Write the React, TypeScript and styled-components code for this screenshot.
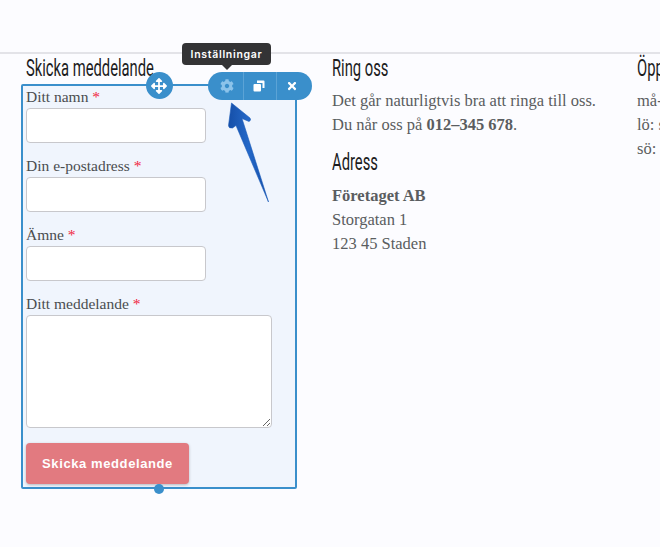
import React from 'react';
import styled, {createGlobalStyle} from 'styled-components';
import {FaArrowsAlt, FaCog, FaTimes} from 'react-icons/fa';

const GlobalStyle = createGlobalStyle`
  html, body {
    margin: 0;
    padding: 0;
    background: #FCFCFF;
  }
`;

const Page = styled.div`
  width: 660px;
  height: 547px;
  overflow: hidden;
  font-family: "Liberation Serif", serif;
  font-size: 16.5px;
  line-height: 24px;
  color: #5A5D60;
`;

const TopBar = styled.div`
  height: 52px;
  border-bottom: 2px solid #E3E3E8;
`;

const Columns = styled.div`
  display: flex;
  width: 800px;
`;

const Column = styled.div<{$width: number}>`
  flex: none;
  width: ${p => p.$width}px;
  box-sizing: border-box;
`;

const FormColumn = styled(Column)`
  padding-left: 26px;
`;

const Heading = styled.h3<{$top?: number; $bottom?: number}>`
  margin: ${p => p.$top ?? 0}px 0 ${p => p.$bottom ?? 0}px;
  font-family: "Roboto", sans-serif;
  font-weight: 400;
  font-size: 24px;
  line-height: 28px;
  color: #1C1C1E;
  white-space: nowrap;
  transform: scaleX(0.615);
  transform-origin: left center;
`;

const Paragraph = styled.p<{$top: number}>`
  margin: ${p => p.$top}px 0 0;
  white-space: nowrap;
`;

const FormBox = styled.div`
  position: relative;
  width: 276px;
  height: 405px;
  margin: 0 0 0 -5px;
  padding: 0 3px;
  box-sizing: border-box;
  border: 2px solid #3A8FCB;
  border-radius: 2px;
  background: #F0F5FD;
`;

const Field = styled.div`
  display: flex;
  flex-direction: column;
  align-items: flex-start;
  margin-bottom: 12px;
`;

const Label = styled.label`
  height: 22px;
  line-height: 22px;
  font-size: 15.5px;
  color: #4A4D50;
`;

const Required = styled.span`
  color: #F0233C;
`;

const TextInput = styled.input`
  width: 180px;
  height: 35px;
  box-sizing: border-box;
  border: 1px solid #C8C8CC;
  border-radius: 4px;
  background: #FFFFFF;
`;

const MessageInput = styled.textarea`
  display: block;
  width: 246px;
  height: 113px;
  box-sizing: border-box;
  border: 1px solid #C8C8CC;
  border-radius: 4px;
  background: #FFFFFF;
`;

const SubmitButton = styled.button`
  display: block;
  width: 163px;
  height: 41px;
  margin-top: 15px;
  padding: 0;
  border: none;
  border-radius: 4px;
  background: #E27A80;
  box-shadow: 0 1px 3px rgba(0, 0, 0, 0.25);
  color: #FFFFFF;
  font-family: "Liberation Sans", sans-serif;
  font-weight: 700;
  font-size: 13px;
  letter-spacing: 0.6px;
`;

const MoveHandle = styled.div`
  position: absolute;
  left: 123px;
  top: -14px;
  width: 27px;
  height: 27px;
  padding-right: 1px;
  box-sizing: border-box;
  display: flex;
  align-items: center;
  justify-content: center;
  border-radius: 50%;
  background: #3A8FCB;
  color: #FFFFFF;
  font-size: 16px;
`;

const Toolbar = styled.div`
  position: absolute;
  left: 185px;
  top: -14px;
  display: flex;
  height: 28px;
  border-radius: 14px;
  background: #3A8FCB;
  color: #FFFFFF;
`;

const ToolButton = styled.div<{$width: number; $active?: boolean; $inset?: string}>`
  width: ${p => p.$width}px;
  padding: ${p => p.$inset ?? '0'};
  box-sizing: border-box;
  display: flex;
  align-items: center;
  justify-content: center;
  font-size: ${p => (p.$active ? 14 : 12)}px;
  color: ${p => (p.$active ? '#8CC3EA' : '#FFFFFF')};
  & + & {
    border-left: 1px solid #5BA3D6;
  }
`;

const Tooltip = styled.div`
  position: absolute;
  left: 159px;
  top: -43px;
  width: 89px;
  height: 22px;
  border-radius: 4px;
  background: #333335;
  color: #FFFFFF;
  font-family: "Inter", "Liberation Sans", sans-serif;
  font-weight: 600;
  font-size: 10.5px;
  line-height: 23px;
  letter-spacing: 0.7px;
  text-align: center;
  &::after {
    content: "";
    position: absolute;
    left: 40px;
    top: 22px;
    border: 5px solid transparent;
    border-top-color: #333335;
    border-bottom-width: 0;
  }
`;

const Arrow = styled.svg`
  position: absolute;
  left: 203px;
  top: 14px;
`;

const ResizeDot = styled.div`
  position: absolute;
  left: 131px;
  bottom: -7px;
  width: 10px;
  height: 10px;
  border-radius: 50%;
  background: #3A8FCB;
`;

const CloneIcon = () => (
    <svg width="12" height="12" viewBox="0 0 12 12">
        <path d="M4 0.5h6.5a1 1 0 0 1 1 1V8h-2V3H4z" fill="currentColor"/>
        <rect x="0.5" y="4" width="7.5" height="7.5" rx="1" fill="currentColor"/>
    </svg>
);

const fields = ['Ditt namn', 'Din e-postadress', 'Ämne'];

const App: React.FC = () => {
    return (
        <Page>
            <GlobalStyle/>
            <TopBar/>
            <Columns>
                <FormColumn $width={332}>
                    <Heading $bottom={2}>Skicka meddelande</Heading>
                    <FormBox>
                        {fields.map(field => (
                            <Field key={field}>
                                <Label>{field} <Required>*</Required></Label>
                                <TextInput/>
                            </Field>
                        ))}
                        <Field>
                            <Label>Ditt meddelande <Required>*</Required></Label>
                            <MessageInput/>
                        </Field>
                        <SubmitButton>Skicka meddelande</SubmitButton>
                        <MoveHandle><FaArrowsAlt/></MoveHandle>
                        <Tooltip>Inställningar</Tooltip>
                        <Toolbar>
                            <ToolButton $width={35} $active $inset="0 0 0 2px"><FaCog/></ToolButton>
                            <ToolButton $width={33} $inset="0 2px 0 0"><CloneIcon/></ToolButton>
                            <ToolButton $width={36} $inset="0 5px 0 0"><FaTimes/></ToolButton>
                        </Toolbar>
                        <Arrow width="46" height="104" viewBox="226 100 46 104">
                            <defs>
                                <linearGradient id="arrowFill" x1="0" y1="0" x2="1" y2="0">
                                    <stop offset="0" stopColor="#164FA8"/>
                                    <stop offset="0.5" stopColor="#2468C8"/>
                                    <stop offset="1" stopColor="#144CA6"/>
                                </linearGradient>
                            </defs>
                            <path
                                d="M231.5 103 L250 118 Q251.5 120.5 249 121.5 L242 118.5 L268.5 202 L236 125.5 L232.5 128 Q228.5 128.5 228.5 125.5 Z"
                                fill="url(#arrowFill)"
                                stroke="#1A5AB8"
                                strokeWidth="0.6"
                                strokeLinejoin="round"
                            />
                        </Arrow>
                        <ResizeDot/>
                    </FormBox>
                </FormColumn>
                <Column $width={305}>
                    <Heading>Ring oss</Heading>
                    <Paragraph $top={7}>
                        Det går naturligtvis bra att ringa till oss.<br/>
                        Du når oss på <b>012–345 678</b>.
                    </Paragraph>
                    <Heading $top={11}>Adress</Heading>
                    <Paragraph $top={8}>
                        <b>Företaget AB</b><br/>
                        Storgatan 1<br/>
                        123 45 Staden
                    </Paragraph>
                </Column>
                <Column $width={150}>
                    <Heading>Öppettider</Heading>
                    <Paragraph $top={7}>
                        må-fr: 9–17<br/>
                        lö: stängt<br/>
                        sö: stängt
                    </Paragraph>
                </Column>
            </Columns>
        </Page>
    );
};

export default App;
